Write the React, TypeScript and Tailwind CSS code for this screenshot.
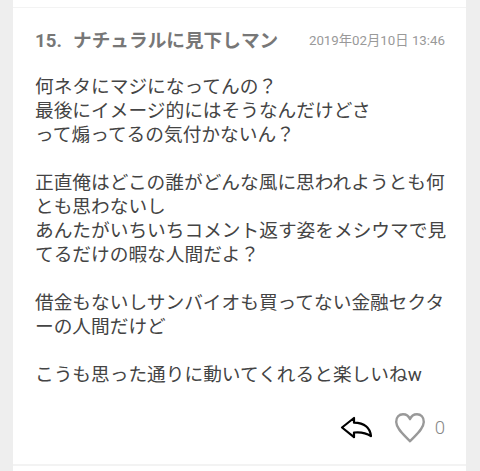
import React from 'react';

interface Comment {
  number: number;
  author: string;
  date: string;
  lines: string[];
  likes: number;
}

const comment: Comment = {
  number: 15,
  author: 'ナチュラルに見下しマン',
  date: '2019年02月10日 13:46',
  lines: [
    '何ネタにマジになってんの？',
    '最後にイメージ的にはそうなんだけどさ',
    'って煽ってるの気付かないん？',
    '',
    '正直俺はどこの誰がどんな風に思われようとも何',
    'とも思わないし',
    'あんたがいちいちコメント返す姿をメシウマで見',
    'てるだけの暇な人間だよ？',
    '',
    '借金もないしサンバイオも買ってない金融セクタ',
    'ーの人間だけど',
    '',
    'こうも思った通りに動いてくれると楽しいねw',
  ],
  likes: 0,
};

const ReplyIcon: React.FC = () => (
  <svg width="34" height="24" viewBox="0 0 34 24" fill="none" stroke="#000" strokeWidth="2.2" strokeLinejoin="round">
    <path d="M2 11.5 L14 2 V6.7 C23 7 30 11 31 20.2 C26 16.8 20 15.8 14 16.5 V21.2 Z" />
  </svg>
);

const HeartIcon: React.FC = () => (
  <svg width="32" height="32" viewBox="0 0 32 32" fill="none" stroke="#999" strokeWidth="2.4" strokeLinejoin="round">
    <path d="M16 29.3 C11 23.5 2.5 17.5 2.2 10 C2 5 5.2 2.2 9 2.2 C12.4 2.2 14.8 4 16 7.2 C17.2 4 19.6 2.2 23 2.2 C26.8 2.2 30 5 29.8 10 C29.5 17.5 21 23.5 16 29.3 Z" />
  </svg>
);

const CommentCard: React.FC<{ comment: Comment }> = ({ comment }) => (
  <article className="flex h-[459px] flex-col border-y-2 border-t border-[#f3f3f3] pl-[22px] pr-[21px] pt-[19px]">
    <header className="flex h-[28px] items-center justify-between whitespace-nowrap">
      <h2 className="flex text-[18.67px] font-bold leading-[28px] text-[#777]">
        <span className="w-[38px]">{comment.number}.</span>
        <span>{comment.author}</span>
      </h2>
      <time className="text-[13.3px] text-[#999]">{comment.date}</time>
    </header>
    <div className="mt-[20px] text-[18.69px] leading-[24px] text-[#444]">
      {comment.lines.map((line, i) => (
        <p key={i} className="h-[24px] whitespace-nowrap">{line}</p>
      ))}
    </div>
    <footer className="mt-[25px] flex h-[32px] items-center justify-end">
      <button type="button" aria-label="Reply"><ReplyIcon /></button>
      <button type="button" aria-label="Like" className="ml-[20px] flex items-center">
        <HeartIcon />
        <span className="ml-[9px] text-[18.67px] font-light text-[#888]">{comment.likes}</span>
      </button>
    </footer>
  </article>
);

const App: React.FC = () => (
  <div className="h-[471px] overflow-hidden bg-[#eee] pl-[13px] pr-[14px] font-[Roboto,'Noto_Sans_CJK_JP',sans-serif]">
    <main className="h-full bg-white pt-[7px]">
      <CommentCard comment={comment} />
    </main>
  </div>
);

export default App;
